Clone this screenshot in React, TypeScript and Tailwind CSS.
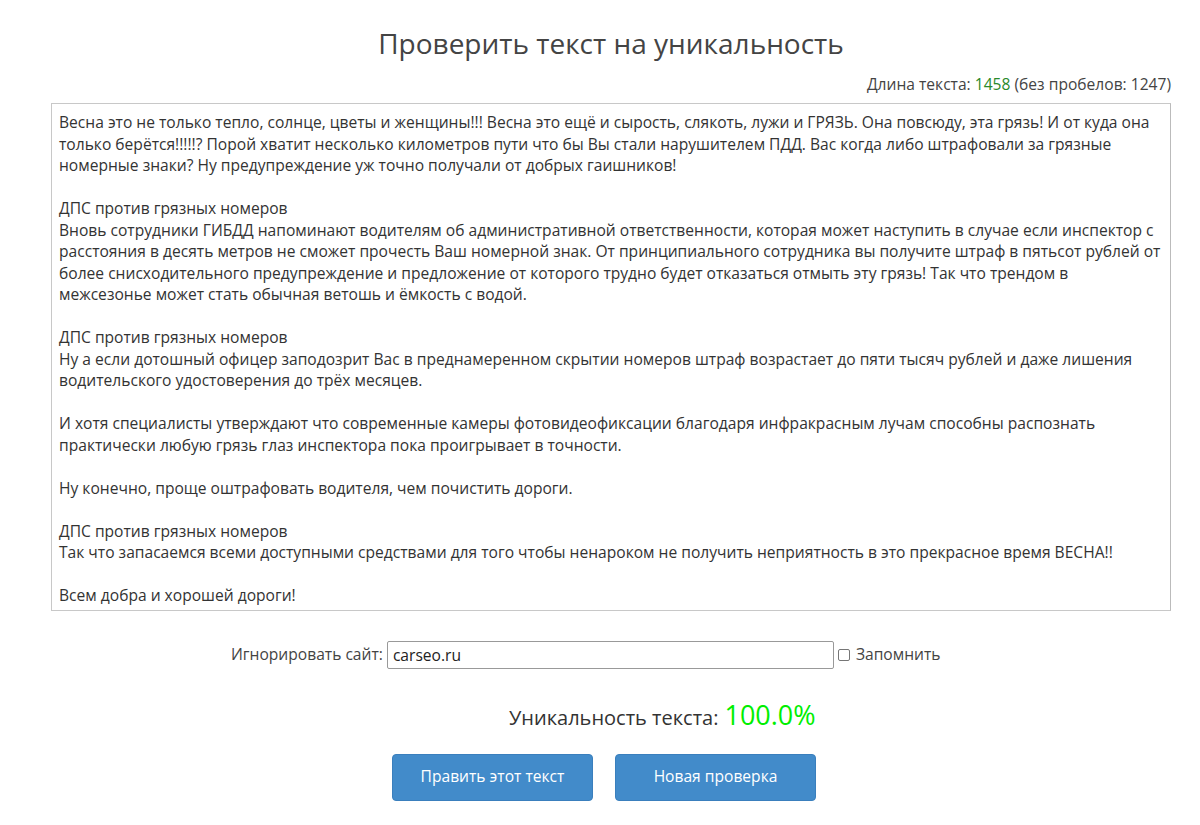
const TEXT = `Весна это не только тепло, солнце, цветы и женщины!!! Весна это ещё и сырость, слякоть, лужи и ГРЯЗЬ. Она повсюду, эта грязь! И от куда она только берётся!!!!!? Порой хватит несколько километров пути что бы Вы стали нарушителем ПДД. Вас когда либо штрафовали за грязные номерные знаки? Ну предупреждение уж точно получали от добрых гаишников!

ДПС против грязных номеров
Вновь сотрудники ГИБДД напоминают водителям об административной ответственности, которая может наступить в случае если инспектор с расстояния в десять метров не сможет прочесть Ваш номерной знак. От принципиального сотрудника вы получите штраф в пятьсот рублей от более снисходительного предупреждение и предложение от которого трудно будет отказаться отмыть эту грязь! Так что трендом в
межсезонье может стать обычная ветошь и ёмкость с водой.

ДПС против грязных номеров
Ну а если дотошный офицер заподозрит Вас в преднамеренном скрытии номеров штраф возрастает до пяти тысяч рублей и даже лишения водительского удостоверения до трёх месяцев.

И хотя специалисты утверждают что современные камеры фотовидеофиксации благодаря инфракрасным лучам способны распознать практически любую грязь глаз инспектора пока проигрывает в точности.

Ну конечно, проще оштрафовать водителя, чем почистить дороги.

ДПС против грязных номеров
Так что запасаемся всеми доступными средствами для того чтобы ненароком не получить неприятность в это прекрасное время ВЕСНА!!

Всем добра и хорошей дороги!`

export default function App() {
  return (
    <div className="w-[1200px] h-[825px] bg-white text-[#333] font-['Open_Sans',sans-serif]">
      <div className="ml-[51px] w-[1120px]">
        {/* Title */}
        <h1 className="pt-[24px] text-center text-[28px] leading-[38px] text-[#444]">
          Проверить текст на уникальность
        </h1>

        {/* Length */}
        <div className="mt-[11px] text-right text-[15.6px] leading-[22px] text-[#444]">
          Длина текста: <span className="text-[#2a8a2a]">1458</span> (без пробелов: 1247)
        </div>

        {/* Text box */}
        <div className="mt-[8px] h-[508px] border border-[#c8c8c8] border-r-[#bbb] pl-[7px] pr-[4px] pt-[8px] text-[15.6px] leading-[21.5px] text-[#333] whitespace-pre-wrap">
          {TEXT}
        </div>
      </div>

      {/* Ignore site */}
      <div className="mt-[30px] flex items-center pl-[231px] text-[15.6px] text-[#444]">
        <span>Игнорировать сайт:</span>
        <input
          defaultValue="carseo.ru"
          className="ml-[4px] w-[447px] h-[28px] border border-[#999] rounded-[2px] px-[5px] text-[15.6px] text-[#222] outline-none"
        />
        <span className="ml-[4px] w-[12px] h-[12px] border border-[#767676] rounded-[2px]" />
        <span className="ml-[6px]">Запомнить</span>
      </div>

      {/* Uniqueness */}
      <div className="mt-[26px] flex items-baseline pl-[509px] text-[#333]">
        <span className="text-[20px]">Уникальность текста:</span>
        <span className="ml-[6px] text-[27px] text-[#00ee00]">100.0%</span>
      </div>

      {/* Buttons */}
      <div className="mt-[18px] flex pl-[392px] gap-[22px]">
        <button className="w-[201px] h-[47px] rounded-[4px] bg-[#428bca] border border-[#3a7fbd] text-white text-[15.6px]">
          Править этот текст
        </button>
        <button className="w-[201px] h-[47px] rounded-[4px] bg-[#428bca] border border-[#3a7fbd] text-white text-[15.6px]">
          Новая проверка
        </button>
      </div>
    </div>
  )
}
